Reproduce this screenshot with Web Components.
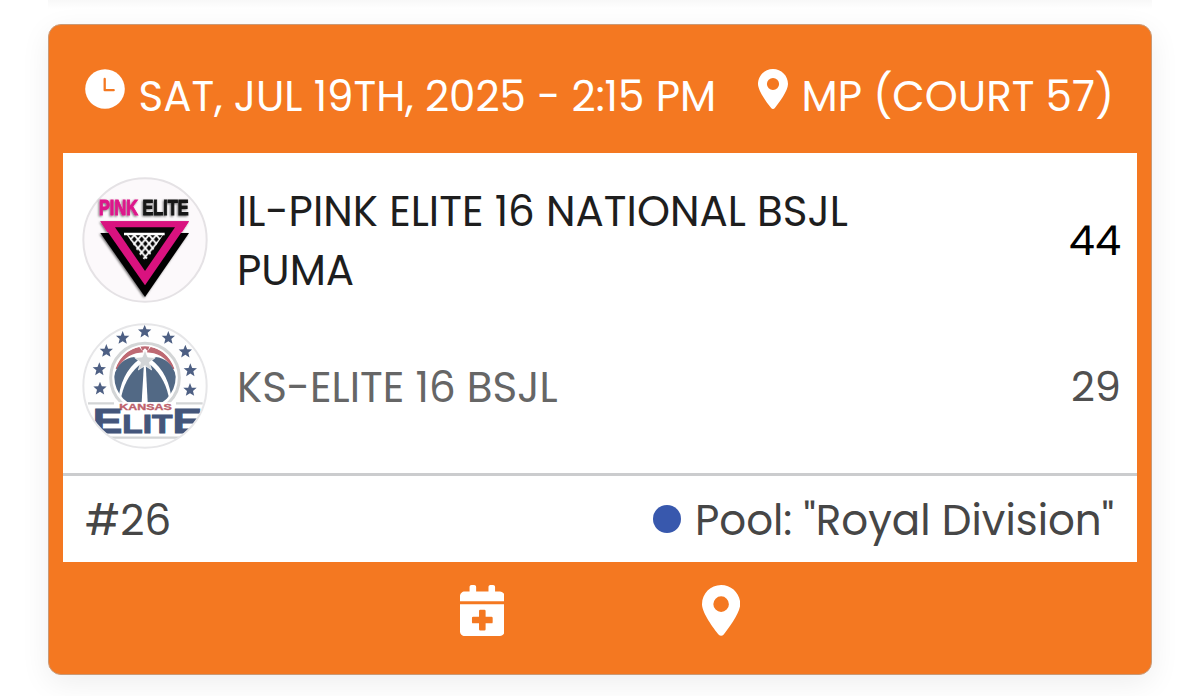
<!DOCTYPE html>
<html lang="en">
<head>
<meta charset="utf-8">
<title>Game</title>
<style>
    body {
        margin: 0;
        height: 696px;
        overflow: hidden;
        background: #fff;
        font-family: Poppins, Inter, "Liberation Sans", sans-serif;
        font-size: 42px;
        line-height: 59px;
    }
</style>
</head>
<body>
<game-card>
    <header-item slot="header" icon="clock">SAT, JUL 19TH, 2025 - 2:15 PM</header-item>
    <header-item slot="header" icon="pin">MP (COURT 57)</header-item>

    <team-row score="44" winner>
        <pink-logo slot="logo"></pink-logo>
        IL-PINK ELITE 16 NATIONAL BSJL<br>PUMA
    </team-row>
    <team-row score="29">
        <kansas-logo slot="logo"></kansas-logo>
        KS-ELITE 16 BSJL
    </team-row>

    <pool-info slot="info" number="#26">Pool: "Royal Division"</pool-info>

    <card-icon slot="actions" name="calendar"></card-icon>
    <card-icon slot="actions" name="pin"></card-icon>
</game-card>

<script>
// Filled icons, all drawn in currentColor
const ICONS = {
    clock: `<svg viewBox="0 0 40 40"><circle cx="20" cy="20" r="19.800" fill="currentColor"/><path d="M19.700 10v11.200h9" fill="none" stroke="#f47821" stroke-width="2.300" stroke-linecap="round" stroke-linejoin="round"/></svg>`,
    pin: `<svg viewBox="0 0 384 512"><path fill="currentColor" d="M215.700 499.200C267 435 384 279.400 384 192C384 86 298 0 192 0S0 86 0 192c0 87.400 117 243 168.300 307.200c12.300 15.300 35.100 15.300 47.400 0zM192 114a78 78 0 1 1 0 156 78 78 0 1 1 0-156z"/></svg>`,
    calendar: `<svg viewBox="0 0 448 512"><path fill="currentColor" fill-rule="evenodd" d="M96 20c0-12 8-20 20-20h26c12 0 20 8 20 20v44h124V20c0-12 8-20 20-20h26c12 0 20 8 20 20v44h48c27 0 48 21 48 48v50H0v-50c0-27 21-48 48-48h48zM0 192h448v272c0 27-21 48-48 48H48c-27 0-48-21-48-48zM203 248q-12 0-12 12v59h-59q-12 0-12 12v42q0 12 12 12h59v59q0 12 12 12h42q12 0 12-12v-59h59q12 0 12-12v-42q0-12-12-12h-59v-59q0-12-12-12z"/></svg>`
};

class CardIcon extends HTMLElement {
    constructor() {
        super();
        this.attachShadow({ mode: 'open' });
    }

    connectedCallback() {
        this.shadowRoot.innerHTML = `
            <style>
                :host { display: block; color: #fff; height: var(--icon-height, 51px); }
                svg { display: block; height: 100%; width: auto; }
            </style>
            ${ICONS[this.getAttribute('name')]}
        `;
    }
}
customElements.define('card-icon', CardIcon);


class HeaderItem extends HTMLElement {
    constructor() {
        super();
        this.attachShadow({ mode: 'open' });
    }

    connectedCallback() {
        this.shadowRoot.innerHTML = `
            <style>
                :host { display: flex; align-items: flex-start; gap: 13.500px; color: #fff; white-space: nowrap; }
                card-icon { --icon-height: 40px; }
                .text { margin-top: -2px; }
            </style>
            <card-icon name="${this.getAttribute('icon')}"></card-icon>
            <div class="text"><slot></slot></div>
        `;
    }
}
customElements.define('header-item', HeaderItem);


class TeamRow extends HTMLElement {
    constructor() {
        super();
        this.attachShadow({ mode: 'open' });
    }

    connectedCallback() {
        this.shadowRoot.innerHTML = `
            <style>
                :host { display: flex; align-items: center; height: 126px; color: #666; }
                :host([winner]) { color: #1e1e1e; }
                .name { flex: 1; margin-left: 29px; padding-top: 2px; white-space: nowrap; }
                .score { color: #505050; padding-top: 1px; font-size: 41.500px; }
                :host([winner]) .score { color: #000; }
            </style>
            <slot name="logo"></slot>
            <div class="name"><slot></slot></div>
            <div class="score">${this.getAttribute('score')}</div>
        `;
    }
}
customElements.define('team-row', TeamRow);


class PinkLogo extends HTMLElement {
    constructor() {
        super();
        this.attachShadow({ mode: 'open' });
    }

    connectedCallback() {
        this.shadowRoot.innerHTML = `
            <style>
                :host { display: block; width: 126px; height: 126px; }
                svg { display: block; width: 100%; height: 100%; }
                text { font: 700 64px "Liberation Sans", sans-serif; }
            </style>
            <svg viewBox="22 22 378 378">
                <defs>
                    <filter id="soft" x="-20%" y="-20%" width="140%" height="140%">
                        <feDropShadow dx="-3" dy="3" stdDeviation="3" flood-color="#000" flood-opacity=".55"/>
                    </filter>
                    <pattern id="mesh" width="22" height="26" x="157" y="196" patternUnits="userSpaceOnUse">
                        <path d="M-2-2.400L24 28.400M24-2.400L-2 28.400" stroke="#fff" stroke-width="5.500"/>
                    </pattern>
                </defs>
                <circle cx="211" cy="211" r="185" fill="#fcf9fb" stroke="#e5e2e5" stroke-width="6"/>
                <g filter="url(#soft)">
                    <text x="73" y="136" textLength="269" lengthAdjust="spacingAndGlyphs" stroke-width="3"><tspan fill="#dd168b" stroke="#dd168b">PINK</tspan><tspan fill="#151515" stroke="#151515"> ELITE</tspan></text>
                    <path d="M77 190H343L211 382z" fill="#050505"/>
                    <path d="M77 155H343L322 187H98z" fill="#d9127f"/>
                </g>
                <path d="M77 155H343L211 347z" fill="#d9127f"/>
                <path d="M121 173H301L211 304z" fill="#050505"/>
                <path d="M148 193H270" stroke="#fff" stroke-width="7"/>
                <path d="M157 196H265L222 262 211 272 200 262z" fill="url(#mesh)"/>
            </svg>
        `;
    }
}
customElements.define('pink-logo', PinkLogo);


class KansasLogo extends HTMLElement {
    constructor() {
        super();
        this.attachShadow({ mode: 'open' });
    }

    connectedCallback() {
        // centres of the stars round the ball
        const stars = [[76, 219], [74, 161], [95, 106], [144, 67], [210, 48], [281, 67], [332, 108], [347, 164], [346, 223]];
        const star = 'M0-21L5.500-7 20-6.500 9 3 12.500 17.500 0 9.500-12.500 17.500-9 3-20-6.500-5.500-7z';

        this.shadowRoot.innerHTML = `
            <style>
                :host { display: block; width: 126px; height: 126px; }
                svg { display: block; width: 100%; height: 100%; }
                text { font-family: "Liberation Sans", sans-serif; font-weight: 700; }
            </style>
            <svg viewBox="22 22 378 378">
                <defs>
                    <clipPath id="round"><circle cx="211" cy="211" r="184"/></clipPath>
                    <clipPath id="ball"><circle cx="211" cy="184" r="92"/></clipPath>
                </defs>
                <circle cx="211" cy="211" r="185" fill="#fefefe"/>
                <g clip-path="url(#round)">
                    ${stars.map(([x, y]) => `<path d="${star}" transform="translate(${x} ${y})" fill="#4d5f83"/>`).join('')}
                    <circle cx="211" cy="186" r="103" fill="#fff" stroke="#d3d5d6" stroke-width="9"/>
                    <g clip-path="url(#ball)">
                        <!-- white ball, then its panels -->
                        <path d="M110 80H312V270H110z" fill="#fff"/>
                        <path d="M122 160C138 118 168 98 194 94L206 110C176 112 150 122 128 160z" fill="#be6973"/>
                        <path d="M300 160C284 118 254 98 228 94L216 110C246 112 272 122 294 160z" fill="#be6973"/>
                        <path d="M197 91h28l-6 15-8-8-8 8z" fill="#be6973"/>
                        <path d="M118 180Q134 128 180 124L192 132Q138 172 130 260H112z" fill="#526985"/>
                        <path d="M304 180Q288 128 242 124L230 132Q284 172 292 260H310z" fill="#526985"/>
                        <path d="M194 148L208 142 201 260H137Q146 190 194 148z" fill="#526985"/>
                        <path d="M228 148L213 142 219 260H285Q276 190 228 148z" fill="#526985"/>
                    </g>
                    <path d="M211 103L219 124 242 126 224 140 231 163 211 150 191 163 198 140 180 126 203 124z" fill="#d2d5d7" stroke="#fff" stroke-width="2"/>
                    <path d="M40 257H110L131 260H292L312 257H384V277L366 371H58L40 277z" fill="#fff"/>
                    <path d="M40 263H118M304 263H384M84 366H345" stroke="#d3d5d6" stroke-width="7"/>
                    <text x="134" y="282" font-size="25" textLength="157" lengthAdjust="spacingAndGlyphs" fill="#bd5f6b" stroke="#bd5f6b">KANSAS</text>
                    <!-- outer letters are taller and run off the badge -->
                    <text x="54" y="352" font-size="106" textLength="328" lengthAdjust="spacingAndGlyphs" fill="#44567b" stroke="#44567b" stroke-width="3">E<tspan font-size="80">LIT</tspan>E</text>
                </g>
                <circle cx="211" cy="211" r="185" fill="none" stroke="#e6e6e8" stroke-width="6"/>
            </svg>
        `;
    }
}
customElements.define('kansas-logo', KansasLogo);


class PoolInfo extends HTMLElement {
    constructor() {
        super();
        this.attachShadow({ mode: 'open' });
    }

    connectedCallback() {
        this.shadowRoot.innerHTML = `
            <style>
                :host { display: flex; align-items: center; color: #464646; height: 86px; padding: 0 23px 0 22px; border-top: 3px solid #cbccce; }
                .pool { display: flex; align-items: center; margin-left: auto; white-space: nowrap; }
                .dot { width: 28px; height: 28px; margin-right: 14px; border-radius: 50%; background: #3858ad; }
                .number, .text { padding-top: 2px; }
            </style>
            <div class="number">${this.getAttribute('number')}</div>
            <div class="pool">
                <span class="dot"></span>
                <div class="text"><slot></slot></div>
            </div>
        `;
    }
}
customElements.define('pool-info', PoolInfo);


class GameCard extends HTMLElement {
    constructor() {
        super();
        this.attachShadow({ mode: 'open' });
    }

    connectedCallback() {
        this.shadowRoot.innerHTML = `
            <style>
                :host { display: flex; flex-direction: column; }
                /* bottom shadow of the card above */
                .previous { height: 24px; flex: none; background: linear-gradient(#f8f8f8, #fff 9px); margin: 0 48px; }
                .card {
                    box-sizing: border-box;
                    width: 1104px;
                    height: 651px;
                    margin: 0 auto;
                    padding: 0 14px;
                    border: 1px solid #c99a77;
                    border-radius: 13px;
                    background: #f47821;
                    box-shadow: 0 8px 30px rgba(0, 0, 0, .07);
                }
                .header { box-sizing: border-box; display: flex; justify-content: space-between; height: 128px; padding: 44px 23px 0 22px; }
                .body { background: #fff; }
                .teams { display: flex; flex-direction: column; gap: 20px; padding: 24px 16px 24px 19px; }
                .actions { display: flex; justify-content: center; gap: 198px; padding-top: 23px; }
            </style>
            <div class="previous"></div>
            <div class="card">
                <div class="header"><slot name="header"></slot></div>
                <div class="body">
                    <div class="teams"><slot></slot></div>
                    <slot name="info"></slot>
                </div>
                <div class="actions"><slot name="actions"></slot></div>
            </div>
        `;
    }
}
customElements.define('game-card', GameCard);
</script>
</body>
</html>
